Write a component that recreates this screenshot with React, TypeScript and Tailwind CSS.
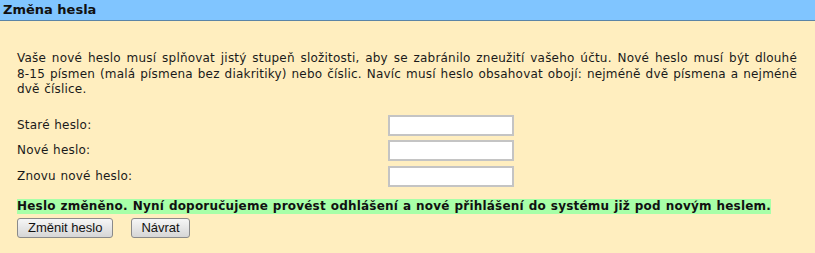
import React from 'react';

const fields = ['Staré heslo:', 'Nové heslo:', 'Znovu nové heslo:'];

const App: React.FC = () => {
  return (
    <div className="min-h-[253px] bg-[#ffeebf] font-['DejaVu_Sans',Verdana,sans-serif] text-[12px] text-[#1a1a1a]">
      {/* Header */}
      <div className="h-[21px] bg-[#80c5ff] border-b border-[#5b84a6] px-[3px] pt-[2px] font-bold text-[13px] leading-[16px] text-[#111]">
        Změna hesla
      </div>

      <div className="pl-[17px] pr-[18px] pt-[30px] tracking-[0.2px] [word-spacing:0.5px]">
        <p className="text-justify leading-[15.5px]">
          Vaše nové heslo musí splňovat jistý stupeň složitosti, aby se zabránilo zneužití vašeho účtu. Nové heslo musí být dlouhé 8‑15 písmen (malá písmena bez diakritiky) nebo číslic. Navíc musí heslo obsahovat obojí: nejméně dvě písmena a nejméně dvě číslice.
        </p>

        {/* Form */}
        <div className="mt-[17px] flex flex-col gap-[4.5px]">
          {fields.map((label) => (
            <div key={label} className="flex items-center h-[21px]">
              <span className="w-[371px] leading-[15px]">{label}</span>
              <input
                type="password"
                className="w-[126px] h-[21px] bg-white border-2 border-[#c4c4c4] outline-none"
              />
            </div>
          ))}
        </div>

        {/* Status */}
        <div className="mt-[10px]">
          <span className="inline-block bg-[#a8ffa8] font-bold leading-[15px] text-[#111]">
            Heslo změněno. Nyní doporučujeme provést odhlášení a nové přihlášení do systému již pod novým heslem.
          </span>
        </div>

        {/* Buttons */}
        <div className="mt-[3px] flex gap-[18px] tracking-normal [word-spacing:normal]">
          <button className="h-[20px] px-[10px] rounded-[3px] border border-[#8a8a8a] bg-gradient-to-b from-[#f6f6f6] to-[#d6d6d6] font-['Liberation_Sans',Arial,sans-serif] text-[13px] leading-[16px] text-[#111]">
            Změnit heslo
          </button>
          <button className="h-[20px] px-[9px] rounded-[3px] border border-[#8a8a8a] bg-gradient-to-b from-[#f6f6f6] to-[#d6d6d6] font-['Liberation_Sans',Arial,sans-serif] text-[13px] leading-[16px] text-[#111]">
            Návrat
          </button>
        </div>
      </div>
    </div>
  );
};

export default App;
